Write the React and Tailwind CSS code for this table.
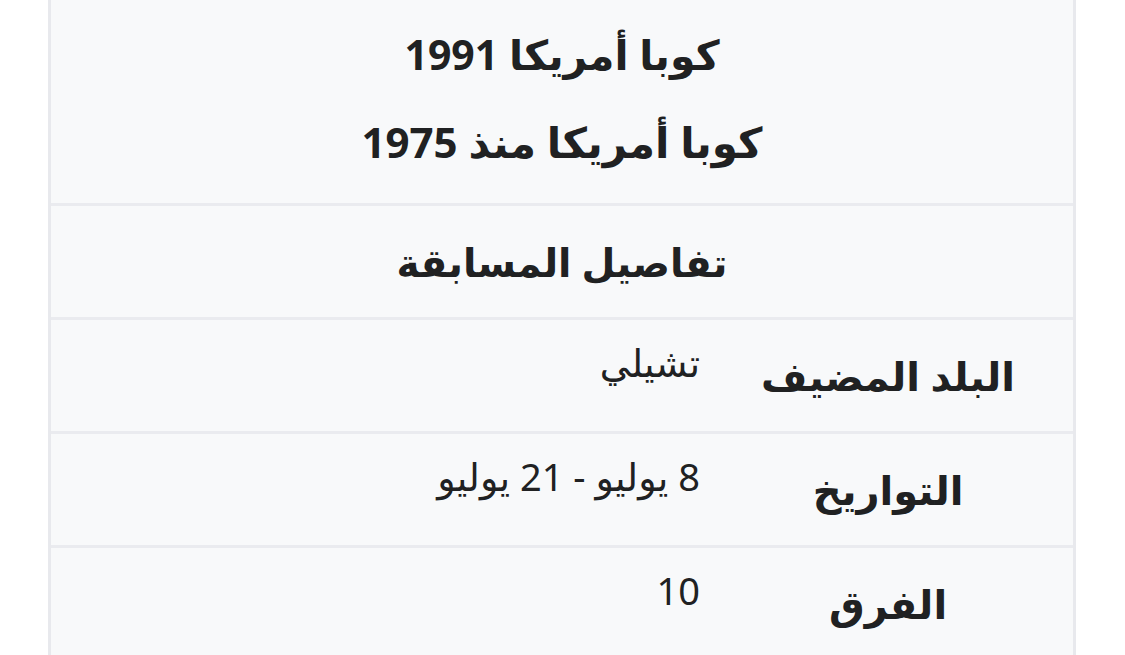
import React from 'react';

const rows = [
  { label: 'البلد المضيف', value: 'تشيلي' },
  { label: 'التواريخ', value: '8 يوليو - 21 يوليو' },
  { label: 'الفرق', value: '10' },
];

const App = () => {
  return (
    <div
      dir="rtl"
      className="min-h-[655px] bg-white pl-[48px] pr-[49px] text-[#202122]"
      style={{ fontFamily: '"Noto Sans", "DejaVu Sans", sans-serif' }}
    >
      <div className="h-[655px] overflow-hidden border-x-[3px] border-[#e8e9ed] bg-[#f8f9fa]">
        <div className="flex h-[206px] flex-col items-center border-b-[3px] border-[#eaebef] pt-[26px]">
          <div className="text-[41px] font-bold leading-[56px]">كوبا أمريكا 1991</div>
          <div className="mt-[32px] text-[42px] font-bold leading-[56px]">كوبا أمريكا منذ 1975</div>
        </div>

        <div className="flex h-[114px] items-center justify-center border-b-[3px] border-[#eaebef]">
          <div className="text-[39px] font-bold leading-[56px]">تفاصيل المسابقة</div>
        </div>

        {rows.map((row) => (
          <div key={row.label} className="flex h-[114px] border-b-[3px] border-[#eaebef]">
            <div className="flex w-[370px] items-center justify-center text-[40px] font-bold">
              {row.label}
            </div>
            <div className="flex-1 pr-[3px] pt-[17px] text-[38px] leading-[50px]">{row.value}</div>
          </div>
        ))}
      </div>
    </div>
  );
};

export default App;
